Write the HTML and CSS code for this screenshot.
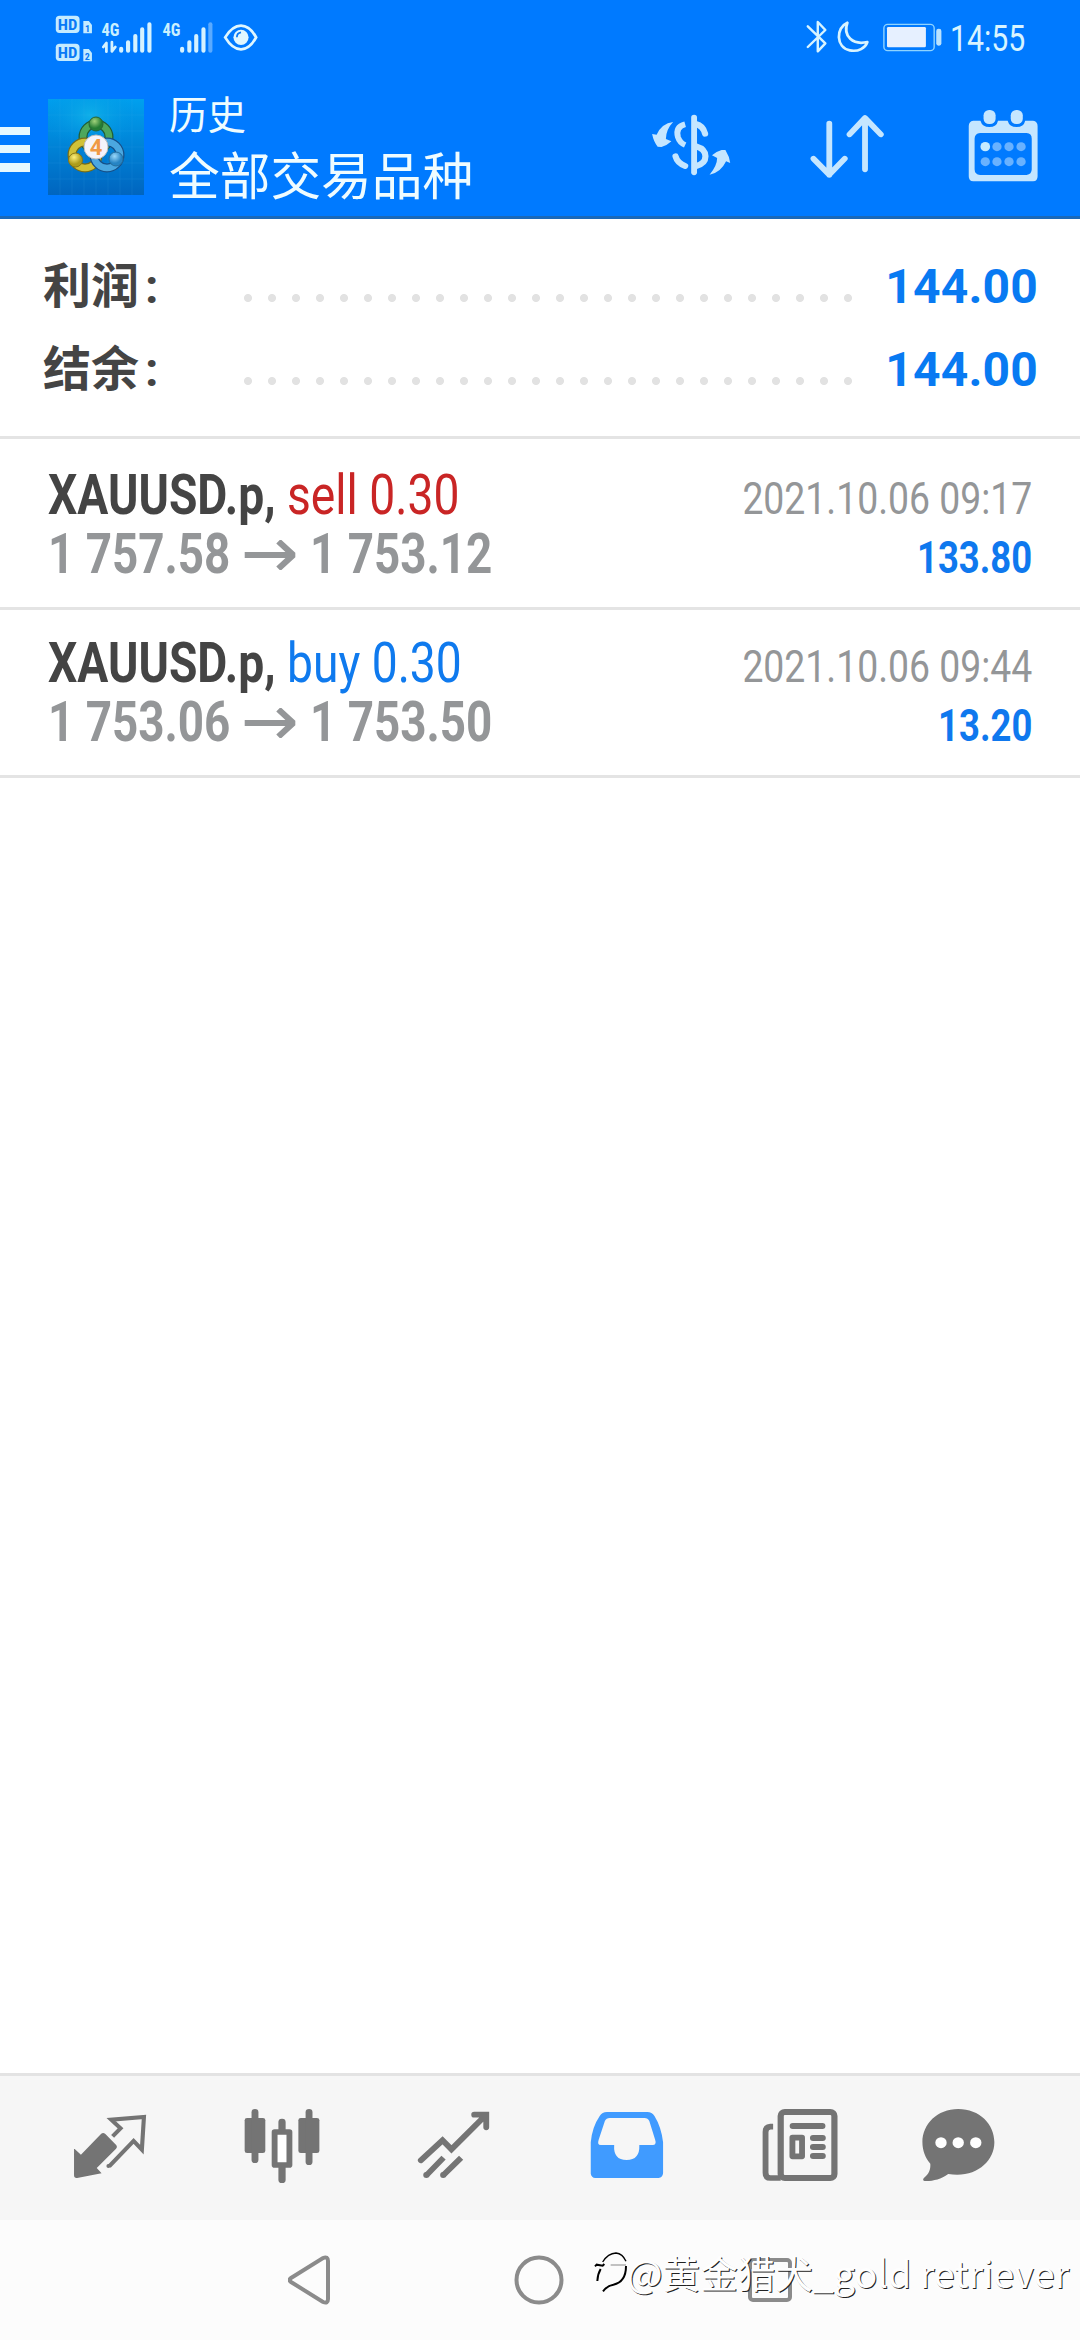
FILE: index.html
```html
<!DOCTYPE html>
<html lang="zh-CN">
<head>
<meta charset="utf-8">
<title>历史</title>
<link rel="stylesheet" href="styles.css">
</head>
<body>
<div class="screen">
  <header class="header">
    <div class="status">
      <svg class="status-left" viewBox="150 35 610 165" preserveAspectRatio="none">
        <g fill="#c4ebff"><rect x="161" y="46" width="69" height="52" rx="11"/><rect x="161" y="130" width="69" height="52" rx="11"/><path d="M241 62h16l9 12v25h-25zM241 146h16l9 12v25h-25z"/></g>
        <g class="badge-text" fill="#0879f6"><text x="167" y="89" font-size="45" textLength="57" lengthAdjust="spacingAndGlyphs">HD</text><text x="167" y="173" font-size="45" textLength="57" lengthAdjust="spacingAndGlyphs">HD</text><text x="246" y="94" font-size="29">1</text><text x="245" y="178" font-size="29">2</text></g>
        <g class="badge-text" fill="#c9f0ff"><text x="294" y="107" font-size="57" textLength="52" lengthAdjust="spacingAndGlyphs">4G</text><text x="471" y="107" font-size="57" textLength="52" lengthAdjust="spacingAndGlyphs">4G</text></g>
        <g stroke="#d5f2ff" stroke-width="12" stroke-linecap="round" fill="none">
          <path d="M351 145v6M371 126v25M392 107v44M412 87v64M433 72v79M528 145v6M549 126v25M569 107v44M590 87v64"/>
          <path d="M610 72v79" stroke="#5aaaff"/>
          <path d="M308 128v26m0-26l-9 12M324 125v28m0 0l10-13" stroke-width="8"/>
        </g>
        <path d="M653 111Q674 76 699 76T743 111Q724 147 699 147T653 111Z" fill="none" stroke="#dff7ff" stroke-width="8"/>
        <ellipse cx="699" cy="111" rx="22" ry="23" fill="#dff7ff"/><path d="M687 111q0-13 12-15" fill="none" stroke="#0879f6" stroke-width="5"/>
      </svg>
      <svg class="status-right" viewBox="760 55 410 110" preserveAspectRatio="none">
        <path d="M771 80l51 51-22 24V67l22 24-51 51" fill="none" stroke="#d8f4ff" stroke-width="7" stroke-linecap="round" stroke-linejoin="round"/>
        <path d="M886 69C852 84 852 143 893 152C918 157 938 145 944 127C903 137 872 111 886 69Z" fill="none" stroke="#d8f4ff" stroke-width="8" stroke-linejoin="round"/>
        <rect x="992" y="74" width="146" height="79" rx="11" fill="none" stroke="#8fd4ff" stroke-width="4"/><rect x="1001" y="82" width="113" height="61" rx="4" fill="#e6f0ff"/><rect x="1144" y="87" width="15" height="51" rx="7" fill="#b9e2ff"/>
      </svg>
      <span class="clock">14:55</span>
    </div>
    <div class="appbar">
      <div class="menu"><i></i><i></i><i></i></div>
      <svg class="logo" viewBox="0 0 96 96">
        <defs>
          <linearGradient id="sky" x2="0" y2="1"><stop stop-color="#00a0ee"/><stop offset="1" stop-color="#0065bf"/></linearGradient>
          <radialGradient id="glow"><stop stop-color="#10b2e9" stop-opacity=".9"/><stop offset="1" stop-color="#0090e0" stop-opacity="0"/></radialGradient>
          <radialGradient id="g1" cx=".4" cy=".3"><stop stop-color="#a1d27b"/><stop offset="1" stop-color="#247c34"/></radialGradient>
          <radialGradient id="g2" cx=".4" cy=".3"><stop stop-color="#fff07a"/><stop offset="1" stop-color="#ad9c1c"/></radialGradient>
          <radialGradient id="g3" cx=".4" cy=".3"><stop stop-color="#9ad8fa"/><stop offset="1" stop-color="#2684c4"/></radialGradient>
        </defs>
        <rect width="96" height="96" fill="url(#sky)"/><ellipse cx="42" cy="16" rx="48" ry="35" fill="url(#glow)"/>
        <path d="M12 0v96M24 0v96M36 0v96M48 0v96M60 0v96M72 0v96M84 0v96M0 16h96M0 32h96M0 48h96M0 64h96M0 80h96" stroke="#42b5f0" stroke-opacity=".13"/>
        <circle cx="48" cy="38" r="13" fill="none" stroke="#205d36" stroke-width="9"/><circle cx="48" cy="38" r="13" fill="none" stroke="#4da75c" stroke-width="6.5"/>
        <circle cx="37" cy="56" r="13" fill="none" stroke="#756c19" stroke-width="9"/><circle cx="37" cy="56" r="13" fill="none" stroke="#d1c137" stroke-width="6.5"/>
        <circle cx="59" cy="56" r="13" fill="none" stroke="#164f88" stroke-width="9"/><circle cx="59" cy="56" r="13" fill="none" stroke="#4ba7e0" stroke-width="6.5"/>
        <circle cx="48" cy="25" r="7" fill="url(#g1)" stroke="#286534"/><circle cx="27.5" cy="61" r="7" fill="url(#g2)" stroke="#887718"/><circle cx="68" cy="60" r="7" fill="url(#g3)" stroke="#256e9d"/>
        <circle cx="48" cy="48" r="12" fill="#f5f4fa" stroke="#bbb"/><text class="logo-num" x="48" y="56" text-anchor="middle">4</text>
      </svg>
      <div class="titles"><div class="title-small">历史</div><div class="title-large">全部交易品种</div></div>
      <div class="actions">
        <svg width="86" height="90" viewBox="310 300 250 270" preserveAspectRatio="none">
          <g fill="none" stroke="#c5e6ff"><path d="M444 353V517" stroke-width="17" stroke-linecap="round"/><path d="M418 373Q389 381 397 411Q402 428 418 435" stroke-width="17"/><path d="M449 372Q470 377 476 401M390 469Q395 489 418 498" stroke-width="18" stroke-linecap="round"/><path d="M450 439Q477 447 477 469Q477 491 450 498" stroke-width="18"/></g>
          <path d="M383 366Q350 370 335 404L322 402Q326 424 338 440L349 441Q365 437 378 424L362 417Q362 389 383 366ZM489 524Q521 519 537 484L549 489Q547 470 535 450L524 450Q509 454 496 466L511 474Q511 497 489 524Z" fill="#c5e6ff"/>
        </svg>
        <svg width="79" height="90" viewBox="775 300 230 270" preserveAspectRatio="none"><path d="M837 371V524M791 476L837 524L882 476M941 508V354M896 403L941 354L987 403" fill="none" stroke="#c5e6ff" stroke-width="17" stroke-linecap="round" stroke-linejoin="round"/></svg>
        <svg width="74" height="90" viewBox="1235 300 215 270" preserveAspectRatio="none">
          <path fill-rule="evenodd" d="M1256 362H1277Q1282 381 1303 381T1328 362H1356Q1361 381 1382 381T1407 362H1430Q1443 364 1443 378V529Q1443 544 1430 544H1256Q1243 544 1243 529V378Q1243 364 1256 362ZM1276 399Q1260 401 1260 416V508Q1260 524 1276 525H1411Q1426 523 1426 508V416Q1426 400 1411 399Z" fill="#c5e6ff"/>
          <rect x="1286" y="330" width="35" height="42" rx="16" fill="#c5e6ff"/><rect x="1365" y="330" width="35" height="42" rx="16" fill="#c5e6ff"/>
          <g fill="#69b2ff"><circle cx="1291" cy="440" r="14" fill="#c5ebff"/><circle cx="1325" cy="440" r="13.5"/><circle cx="1360" cy="440" r="13.5"/><circle cx="1395" cy="440" r="13.5"/><circle cx="1291" cy="485" r="13.5"/><circle cx="1325" cy="485" r="13.5"/><circle cx="1360" cy="485" r="13.5"/><circle cx="1395" cy="485" r="13.5"/></g>
        </svg>
      </div>
    </div>
  </header>

  <main class="content">
    <section class="summary">
      <div class="sum-row"><span class="sum-label">利润<span class="colon">:</span></span><span class="dots"></span><span class="sum-value">144.00</span></div>
      <div class="sum-row"><span class="sum-label">结余<span class="colon">:</span></span><span class="dots"></span><span class="sum-value">144.00</span></div>
    </section>
    <section class="trade">
      <div class="line"><div class="deal"><b>XAUUSD.p,</b> <span class="sell">sell 0.30</span></div><div class="date">2021.10.06 09:17</div></div>
      <div class="line"><div class="prices"><span class="price">1 757.58</span><svg class="arrow" viewBox="705 295 160 90" preserveAspectRatio="none"><path d="M710 340H852M808 299L851 340L808 381" fill="none" stroke="#949698" stroke-width="18" stroke-linejoin="bevel"/></svg><span class="price">1 753.12</span></div><div class="profit">133.80</div></div>
    </section>
    <section class="trade">
      <div class="line"><div class="deal"><b>XAUUSD.p,</b> <span class="buy">buy 0.30</span></div><div class="date">2021.10.06 09:44</div></div>
      <div class="line"><div class="prices"><span class="price">1 753.06</span><svg class="arrow" viewBox="705 295 160 90" preserveAspectRatio="none"><path d="M710 340H852M808 299L851 340L808 381" fill="none" stroke="#949698" stroke-width="18" stroke-linejoin="bevel"/></svg><span class="price">1 753.50</span></div><div class="profit">13.20</div></div>
    </section>
  </main>

  <nav class="tabs">
    <svg viewBox="145.2 165 348.5 240" preserveAspectRatio="none"><path d="M217 297L235 314L294 251Q300 247 306 252L338 286Q342 291 337 296L281 354L295 370L224 384Q215 385 215 376V297Z" fill="#747474"/><path d="M327 259L350 235L323 209L418 201L412 299L388 273L317 349" fill="none" stroke="#747474" stroke-width="12"/><circle cx="315" cy="348" r="6" fill="#747474"/></svg>
    <svg viewBox="646.1 165 348.5 240" preserveAspectRatio="none"><g fill="#747474"><rect x="709" y="204" width="60" height="105" rx="7"/><rect x="729" y="177" width="20" height="162" rx="10"/><rect x="865" y="204" width="61" height="105" rx="7"/><rect x="886" y="177" width="20" height="168" rx="10"/><rect x="807" y="206" width="21" height="45" rx="10"/><rect x="807" y="340" width="21" height="59" rx="10"/></g><rect x="796" y="246" width="43" height="99" fill="#fff" stroke="#747474" stroke-width="17" stroke-linejoin="round"/></svg>
    <svg viewBox="1147 165 348.5 240" preserveAspectRatio="none"><path d="M1222 331L1285 271L1311 298L1411 195M1377 194H1412V232" fill="none" stroke="#747474" stroke-width="17" stroke-linecap="round"/><path d="M1238 376L1288 323M1287 376L1339 323" fill="none" stroke="#747474" stroke-width="17"/><circle cx="1238" cy="375" r="9" fill="#747474"/><circle cx="1287" cy="375" r="9" fill="#747474"/></svg>
    <svg viewBox="79.9 165 348.5 240" preserveAspectRatio="none"><path fill-rule="evenodd" d="M193 186H310Q324 186 331 198Q351 231 356 277V370Q355 382 343 384H159Q148 383 146 371V277Q150 231 172 198Q179 186 193 186ZM201 204Q191 204 187 213L169 269Q164 285 175 285H214Q211 330 250 330T287 285H326Q338 284 333 269L316 213Q312 204 302 204Z" fill="#409bff"/></svg>
    <svg viewBox="580.8 165 348.5 240" preserveAspectRatio="none"><g fill="none" stroke="#747474"><rect x="699" y="186" width="156" height="198" rx="12" stroke-width="18"/><path d="M677 230H669Q655 231 655 246V368Q655 384 669 384H699" stroke-width="17"/><rect x="733" y="263" width="28" height="56" stroke-width="17" stroke-linejoin="round"/><path d="M734 228H820M793 264H821M793 291H821M793 318H821" stroke-width="18" stroke-linecap="round"/></g></svg>
    <svg viewBox="1081.7 165 348.5 240" preserveAspectRatio="none"><path d="M1213 177C1275 177 1318 222 1318 277C1318 337 1261 386 1184 372C1162 388 1139 394 1115 393C1110 391 1110 387 1114 383C1128 371 1133 359 1132 341C1118 325 1109 302 1109 276C1109 223 1152 177 1213 177Z" fill="#747474"/><g fill="#fff"><circle cx="1163" cy="278" r="16.5"/><circle cx="1213" cy="278" r="16.5"/><circle cx="1264" cy="278" r="16.5"/></g></svg>
  </nav>
  <footer class="system">
    <svg width="42" height="50" viewBox="0 0 42 50"><path d="M3 23L35 3Q40 1 40 6V44Q40 49 35 47L3 27Q0 25 3 23Z" fill="none" stroke="#8b8b8b" stroke-width="4"/></svg>
    <svg width="50" height="50" viewBox="0 0 50 50"><circle cx="25" cy="25" r="22.5" fill="none" stroke="#8b8b8b" stroke-width="4"/></svg>
    <svg width="44" height="44" viewBox="0 0 44 44"><rect x="2" y="2" width="40" height="40" rx="3" fill="none" stroke="#8b8b8b" stroke-width="4"/></svg>
    <div class="watermark">
      <svg width="33" height="48" viewBox="40 88 99 144"><path d="M66 124Q82 98 106 97Q126 99 136 122" fill="none" stroke="#000" stroke-width="4"/><path d="M43 137L48 132L66 135L71 130M60 145Q51 160 50 181M136 136Q136 184 98 192Q80 195 67 212" fill="none" stroke="#000" stroke-width="6"/><path d="M90 133H136" stroke="#888" stroke-width="3"/></svg>
      <span>@黄金猎犬_gold retriever</span>
    </div>
  </footer>
</div>
</body>
</html>
```
FILE: styles.css
```css
* { box-sizing: border-box; }
body { margin: 0; background: #fff; font-family: Roboto, "Noto Sans CJK SC", sans-serif; }
svg { display: block; flex: none; }
.screen { width: 1080px; height: 2340px; display: flex; flex-direction: column; overflow: hidden; }

.header { height: 219px; flex: none; background: #007aff; border-bottom: 3px solid #1a69b9; }
.status { height: 75px; display: flex; align-items: flex-start; padding: 0 55px 0 51.7px; color: #d8f4ff; }
.status-left { width: 210px; height: 55px; margin-top: 11.7px; }
.status-right { width: 141.2px; height: 36.7px; margin: 18.3px 0 0 auto; }
.badge-text { font-family: "Roboto Condensed", Roboto, sans-serif; font-weight: 700; }
.clock { width: 75px; margin-left: 5px; margin-top: 18px; font-size: 36px; line-height: 42px; white-space: nowrap; transform: scaleX(.84); transform-origin: 0 0; }
.appbar { height: 141px; display: flex; align-items: flex-start; padding: 0 40px 0 0; }
.menu { width: 30px; margin-top: 52px; display: flex; flex-direction: column; gap: 9.7px; }
.menu i { height: 8.4px; background: #e6f8ff; }
.logo { width: 96px; height: 96px; margin: 24px 0 0 18px; }
.logo-num { font: 700 22px Roboto, sans-serif; fill: #f09a45; }
.titles { margin: 12px 0 0 25px; color: #effcff; white-space: nowrap; font-family: "Noto Sans CJK SC", sans-serif; }
.title-small { font-size: 38.5px; line-height: 50px; }
.title-large { font-size: 50.7px; line-height: 72px; }
.actions { display: flex; margin: 25px 0 0 auto; }
.actions svg + svg { margin-left: 74px; }
.actions svg:last-child { margin-left: 79px; }

.content { flex: 1; }
.summary { height: 220px; padding: 26px 43px 0 43px; border-bottom: 3px solid #e4e4e4; }
.sum-row { height: 83px; display: flex; line-height: 83px; font-size: 48px; font-weight: 700; }
.sum-label { width: 193px; color: #444; white-space: pre; }
.colon { margin-left: 6px; }
.dots { width: 624px; height: 12px; margin-top: 47px; background: radial-gradient(circle at 12px 6px, #e2e2e2 3.6px, transparent 4.4px) 0 0 / 24px 12px; }
.sum-value { margin: 0 -1px 0 auto; color: #087af2; letter-spacing: .2px; }
.trade { height: 171px; margin-bottom: -3px; border-bottom: 3px solid #e4e4e4; padding: 27px 48px 0; }
.line { height: 59px; display: flex; justify-content: space-between; align-items: baseline; line-height: 59px; white-space: nowrap; }
.deal { font-size: 55px; color: #444; transform: scaleX(.84); transform-origin: 0 0; }
.sell { color: #c92525; }
.buy { color: #0f7aee; }
.date { font-size: 45px; color: #949698; transform: scaleX(.83); transform-origin: 100% 0; }
.prices { display: flex; align-items: center; gap: 12.5px; color: #949698; font-size: 55px; font-weight: 700; }
.price { width: 182px; transform: scaleX(.833); transform-origin: 0 0; }
.arrow { width: 55px; height: 30px; }
.profit { font-size: 45px; font-weight: 700; color: #0f78ee; transform: scaleX(.81); transform-origin: 100% 0; }

.tabs { height: 147px; flex: none; display: flex; gap: 52.5px; padding: 29px 0 0 50px; background: #f6f6f6; border-top: 3px solid #e3e3e3; }
.tabs svg { width: 120px; height: 80px; }
.system { position: relative; height: 120px; flex: none; display: flex; align-items: center; gap: 184px; padding-left: 288px; background: #fcfcfc; }
.watermark { position: absolute; left: 594px; top: 30px; display: flex; align-items: flex-start; color: #fefefe; font: 37.6px/50px "Noto Sans CJK SC", sans-serif; text-shadow: 1px 1px 0 #222; white-space: nowrap; }
.watermark span { margin-top: -3px; }
```
